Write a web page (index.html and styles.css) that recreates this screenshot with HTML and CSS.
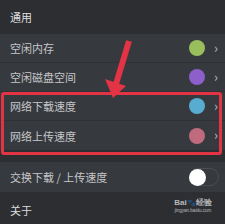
FILE: index.html
```html
<!DOCTYPE html>
<html lang="zh">
<head>
<meta charset="utf-8">
<link rel="stylesheet" href="styles.css">
</head>
<body>
<div class="page">
  <div class="section-title">通用</div>
  <div class="group">
    <div class="row"><span class="label">空闲内存</span><span class="dot green"></span><span class="chev">›</span></div>
    <div class="row"><span class="label">空闲磁盘空间</span><span class="dot purple"></span><span class="chev">›</span></div>
    <div class="row"><span class="label">网络下载速度</span><span class="dot blue"></span><span class="chev">›</span></div>
    <div class="row last"><span class="label">网络上传速度</span><span class="dot pink"></span><span class="chev">›</span></div>
  </div>
  <div class="group spaced">
    <div class="row toggle-row last"><span class="label">交换下载 / 上传速度</span><span class="toggle"><span class="knob"></span></span></div>
  </div>
  <div class="section-title about">关于</div>

  <div class="highlight"></div>
  <svg class="arrow" width="225" height="224" viewBox="0 0 225 224">
    <line x1="129" y1="41" x2="116" y2="84" stroke="#e23445" stroke-width="6"/>
    <polygon points="105,79 126,86 113,98" fill="#e23445"/>
  </svg>
  <div class="watermark">
    <div class="wm-top">Bai<span class="paw">&#x1F43E;</span>经验</div>
    <div class="wm-bottom">jingyan.baidu.com</div>
  </div>
</div>
</body>
</html>
```
FILE: styles.css
```css
html, body {
  margin: 0;
  padding: 0;
  background: #2c2e32;
}
.page {
  position: relative;
  width: 225px;
  height: 224px;
  overflow: hidden;
  font-family: "Noto Sans CJK SC", "Noto Sans", sans-serif;
  background: #2c2e32;
}
.section-title {
  height: 34px;
  display: flex;
  align-items: center;
  padding-left: 10px;
  font-size: 11px;
  color: #dedede;
}
.section-title.about {
  height: 32px;
  padding-top: 4px;
  box-sizing: border-box;
}
.group {
  background: #36393e;
}
.group.spaced {
  margin-top: 12px;
}
.row {
  height: 29px;
  display: flex;
  align-items: center;
  padding-left: 10px;
  padding-right: 6px;
  border-bottom: 1px solid #2f3135;
  box-sizing: border-box;
}
.row.last {
  border-bottom: none;
}
.toggle-row {
  height: 30px;
}
.label {
  flex: 1;
  font-size: 11px;
  color: #c6c7c9;
}
.dot {
  width: 16px;
  height: 16px;
  border-radius: 50%;
  margin-right: 9px;
}
.green { background: #98bf5c; }
.purple { background: #8c5fca; }
.blue { background: #58acd0; }
.pink { background: #c06a7e; }
.chev {
  color: #b9babc;
  font-size: 13px;
  line-height: 1;
  width: 5px;
  margin-bottom: 2px;
}
.toggle {
  width: 30px;
  height: 18px;
  border-radius: 9px;
  border: 1px solid #4a4d52;
  box-sizing: border-box;
  display: flex;
  align-items: center;
  position: relative;
}
.knob {
  width: 17px;
  height: 17px;
  border-radius: 50%;
  background: #ffffff;
  margin-left: -1px;
}
.highlight {
  position: absolute;
  left: 1px;
  top: 92px;
  width: 221px;
  height: 63px;
  border: 3.5px solid #e23445;
  border-radius: 3px;
  box-sizing: border-box;
}
.arrow {
  position: absolute;
  left: 0;
  top: 0;
}
.watermark {
  position: absolute;
  left: 170px;
  top: 198px;
  width: 46px;
  color: rgba(230, 230, 230, 0.75);
  font-family: "Liberation Sans", sans-serif;
  text-align: center;
}
.wm-top {
  font-size: 8px;
  font-weight: bold;
  line-height: 10px;
  white-space: nowrap;
}
.wm-top .paw {
  font-size: 7px;
}
.wm-bottom {
  font-size: 4.5px;
  line-height: 6px;
  white-space: nowrap;
}
```
